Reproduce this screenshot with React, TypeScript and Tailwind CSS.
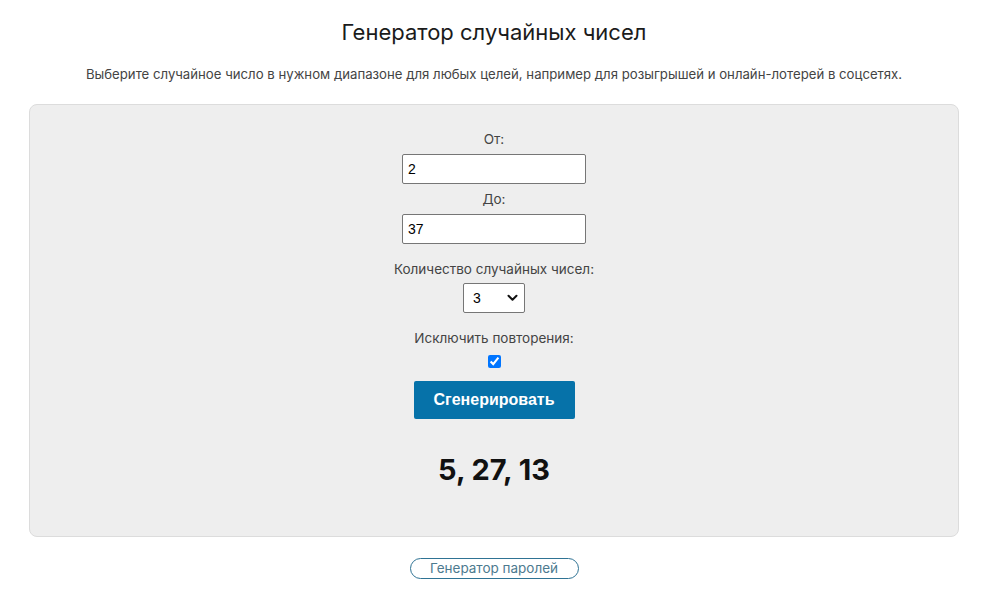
import { useState } from "react";

export default function App() {
  const [from, setFrom] = useState("2");
  const [to, setTo] = useState("37");
  const [count, setCount] = useState("3");
  const [unique, setUnique] = useState(true);

  return (
    <div className="min-h-[603px] bg-white font-['Inter','Noto_Sans',sans-serif] text-[#222]">
      <div className="ml-[29px] w-[930px] pt-[19px]">
        <h1 className="text-center text-[22px] font-normal leading-[26px] text-[#1b1b1b]">
          Генератор случайных чисел
        </h1>
        <p className="mt-[19px] text-center text-[13.2px] leading-[20px] text-[#444]">
          Выберите случайное число в нужном диапазоне для любых целей, например для розыгрышей и онлайн-лотерей в соцсетях.
        </p>

        {/* панель генератора */}
        <div className="mt-[20px] flex flex-col items-center rounded-lg border border-[#dcdcdc] bg-[#eeeeee] pb-[48px] pt-[24px]">
          <label className="text-[13.5px] leading-[20px] text-[#444]">От:</label>
          <input
            value={from}
            onChange={(e) => setFrom(e.target.value)}
            className="mt-[5px] h-[30px] w-[184px] rounded-[2px] border border-[#767676] bg-white px-[5px] font-['Liberation_Sans',Arial,sans-serif] text-[14px] text-black outline-none"
          />
          <label className="mt-[5px] text-[13.5px] leading-[20px] text-[#444]">До:</label>
          <input
            value={to}
            onChange={(e) => setTo(e.target.value)}
            className="mt-[5px] h-[30px] w-[184px] rounded-[2px] border border-[#767676] bg-white px-[5px] font-['Liberation_Sans',Arial,sans-serif] text-[14px] text-black outline-none"
          />
          <label className="mt-[15px] text-[13.5px] leading-[20px] text-[#444]">
            Количество случайных чисел:
          </label>
          <div className="relative mt-[4px]">
            <select
              value={count}
              onChange={(e) => setCount(e.target.value)}
              className="h-[30px] w-[62px] appearance-none rounded-[2px] border border-[#767676] bg-white pl-[9px] font-['Liberation_Sans',Arial,sans-serif] text-[14px] text-black outline-none"
            >
              {["1", "2", "3", "4", "5", "6", "7", "8", "9", "10"].map((n) => (
                <option key={n} value={n}>
                  {n}
                </option>
              ))}
            </select>
            <svg
              className="pointer-events-none absolute right-[7px] top-[11px]"
              width="11"
              height="8"
              viewBox="0 0 11 8"
              fill="none"
            >
              <path d="M1.5 1.8 L5.5 5.8 L9.5 1.8" stroke="#111" strokeWidth="2" strokeLinecap="round" strokeLinejoin="round" />
            </svg>
          </div>
          <label className="mt-[15px] text-[13.5px] leading-[20px] text-[#444]">
            Исключить повторения:
          </label>
          <input
            type="checkbox"
            checked={unique}
            onChange={(e) => setUnique(e.target.checked)}
            className="mt-[7px] size-[13px] accent-[#0075ff]"
          />
          <button className="mt-[13px] h-[38px] w-[161px] rounded-[2px] bg-[#0672a9] font-['Liberation_Sans',Arial,sans-serif] text-[16px] font-bold text-white">
            Сгенерировать
          </button>
          <div className="mt-[33px] text-[29px] font-bold leading-[36px] text-[#111]">5, 27, 13</div>
        </div>

        <div className="mt-[21px] flex justify-center">
          <a
            href="#"
            className="flex h-[21px] w-[169px] items-center justify-center rounded-full border border-[#2f7394] text-[13.5px] text-[#4d7a8f]"
          >
            Генератор паролей
          </a>
        </div>
      </div>
    </div>
  );
}
